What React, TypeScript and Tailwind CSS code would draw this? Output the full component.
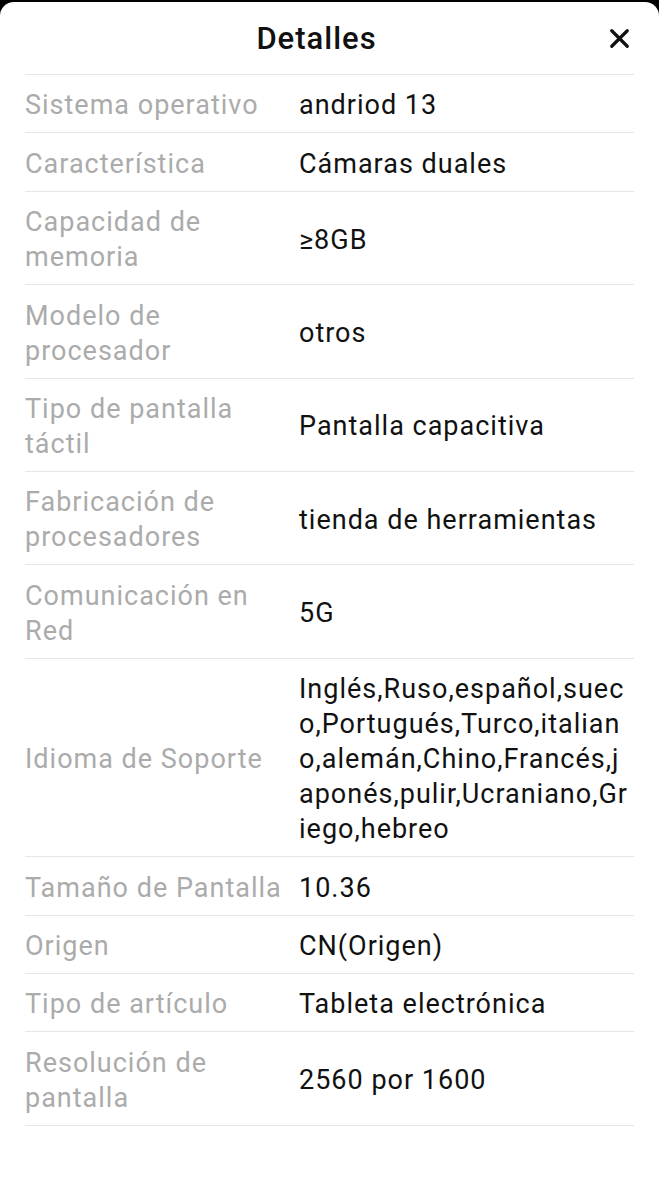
import { X } from "lucide-react";

const ROWS: [string, string][] = [
  ["Sistema operativo", "andriod 13"],
  ["Característica", "Cámaras duales"],
  ["Capacidad de memoria", "≥8GB"],
  ["Modelo de procesador", "otros"],
  ["Tipo de pantalla táctil", "Pantalla capacitiva"],
  ["Fabricación de procesadores", "tienda de herramientas"],
  ["Comunicación en Red", "5G"],
  [
    "Idioma de Soporte",
    "Inglés,Ruso,español,sueco,Portugués,Turco,italiano,alemán,Chino,Francés,japonés,pulir,Ucraniano,Griego,hebreo",
  ],
  ["Tamaño de Pantalla", "10.36"],
  ["Origen", "CN(Origen)"],
  ["Tipo de artículo", "Tableta electrónica"],
  ["Resolución de pantalla", "2560 por 1600"],
];

export default function App() {
  return (
    <div className="bg-black pt-[2px] w-[659px] h-[1200px] font-['Roboto',sans-serif]">
      <div className="bg-white rounded-t-[14px] h-[1198px]">
        {/* header */}
        <div className="relative h-[72px] flex items-center justify-center pr-[26px]">
          <h2 className="text-[31px] tracking-[1px] font-medium text-[#111] leading-none">Detalles</h2>
          <button className="absolute right-[24px] top-[21px] text-[#111]">
            <X size={31} strokeWidth={2.5} />
          </button>
        </div>

        <div className="mx-[25px] border-t border-[#e6e6e6]">
          {ROWS.map(([label, value]) => (
            <div
              key={label}
              className="flex items-center border-b border-[#e6e6e6] pt-[13.4px] pb-[9px] text-[27px] tracking-[1px] leading-[35px]"
            >
              <div className="w-[274px] shrink-0 pr-[4px] text-[#ababab]">{label}</div>
              <div className="flex-1 text-[#111] break-all">{value}</div>
            </div>
          ))}
        </div>
      </div>
    </div>
  );
}
